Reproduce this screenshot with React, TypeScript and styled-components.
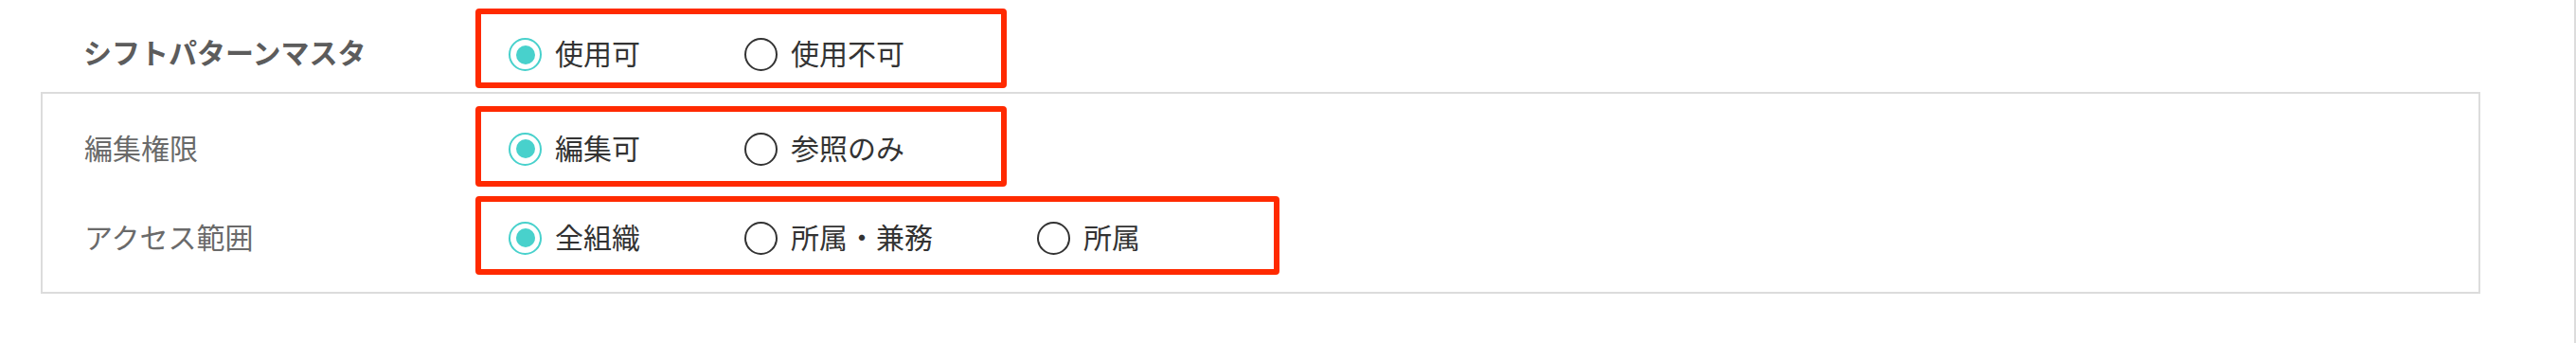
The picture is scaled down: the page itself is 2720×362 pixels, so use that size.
import React from "react";
import styled, { createGlobalStyle } from "styled-components";

const GlobalStyle = createGlobalStyle`
  html, body {
    margin: 0;
    padding: 0;
    background: #ffffff;
  }
  body {
    font-family: "Noto Sans CJK JP", "Noto Sans", sans-serif;
  }
  * { box-sizing: border-box; }
`;

const Page = styled.div`
  width: 2720px;
  height: 362px;
  padding: 9px 0 0 43px;
  border-right: 2px solid #dcdcdc;
  background: #fff;
`;

const TopRow = styled.div`
  display: flex;
  align-items: center;
  padding-left: 45px;
  margin-bottom: 4px;
`;

const Panel = styled.section`
  width: 2576px;
  border: 2px solid #dcdcdc;
  padding: 13px 0 18px 44px;
  display: flex;
  flex-direction: column;
  gap: 10px;
`;

const Row = styled.div`
  display: flex;
  align-items: center;
`;

const Label = styled.div<{ $strong?: boolean; $width: number; $nudge?: number }>`
  width: ${(p) => p.$width}px;
  flex-shrink: 0;
  font-size: 30px;
  line-height: 1.4;
  color: ${(p) => (p.$strong ? "#5c5c5c" : "#6a6a6a")};
  font-weight: ${(p) => (p.$strong ? 600 : 400)};
  margin-top: ${(p) => p.$nudge ?? 0}px;
  white-space: nowrap;
`;

const Group = styled.div<{ $width: number; $height: number; $padTop?: number }>`
  width: ${(p) => p.$width}px;
  height: ${(p) => p.$height}px;
  border: 6px solid #ff2a00;
  border-radius: 4px;
  display: flex;
  align-items: center;
  gap: 110px;
  padding: ${(p) => p.$padTop ?? 0}px 0 0 29px;
`;

const Option = styled.label`
  display: flex;
  align-items: center;
  gap: 14px;
  font-size: 30px;
  line-height: 1.4;
  color: #333333;
  white-space: nowrap;
  cursor: pointer;
`;

const Radio = styled.span<{ $checked?: boolean }>`
  width: 35px;
  height: 35px;
  border-radius: 50%;
  flex-shrink: 0;
  border: 2px solid ${(p) => (p.$checked ? "#48d1cc" : "#333333")};
  display: flex;
  align-items: center;
  justify-content: center;
  margin-top: 5px;
  &::after {
    content: "";
    width: 20px;
    height: 20px;
    border-radius: 50%;
    background: ${(p) => (p.$checked ? "#48d1cc" : "transparent")};
  }
`;

type Choice = { label: string; checked?: boolean };

const RadioGroup: React.FC<{
  options: Choice[];
  width: number;
  height: number;
  padTop?: number;
}> = ({ options, width, height, padTop }) => (
  <Group $width={width} $height={height} $padTop={padTop} role="radiogroup">
    {options.map((o) => (
      <Option key={o.label}>
        <Radio $checked={o.checked} role="radio" aria-checked={!!o.checked} />
        {o.label}
      </Option>
    ))}
  </Group>
);

export default function App() {
  return (
    <>
      <GlobalStyle />
      <Page>
        <TopRow>
          <Label $strong $width={414} $nudge={6}>
            シフトパターンマスタ
          </Label>
          <RadioGroup
            width={561}
            height={84}
            padTop={8}
            options={[{ label: "使用可", checked: true }, { label: "使用不可" }]}
          />
        </TopRow>
        <Panel>
          <Row>
            <Label $width={413}>編集権限</Label>
            <RadioGroup
              width={561}
              height={85}
              options={[{ label: "編集可", checked: true }, { label: "参照のみ" }]}
            />
          </Row>
          <Row>
            <Label $width={413}>アクセス範囲</Label>
            <RadioGroup
              width={849}
              height={83}
              options={[
                { label: "全組織", checked: true },
                { label: "所属・兼務" },
                { label: "所属" },
              ]}
            />
          </Row>
        </Panel>
      </Page>
    </>
  );
}
